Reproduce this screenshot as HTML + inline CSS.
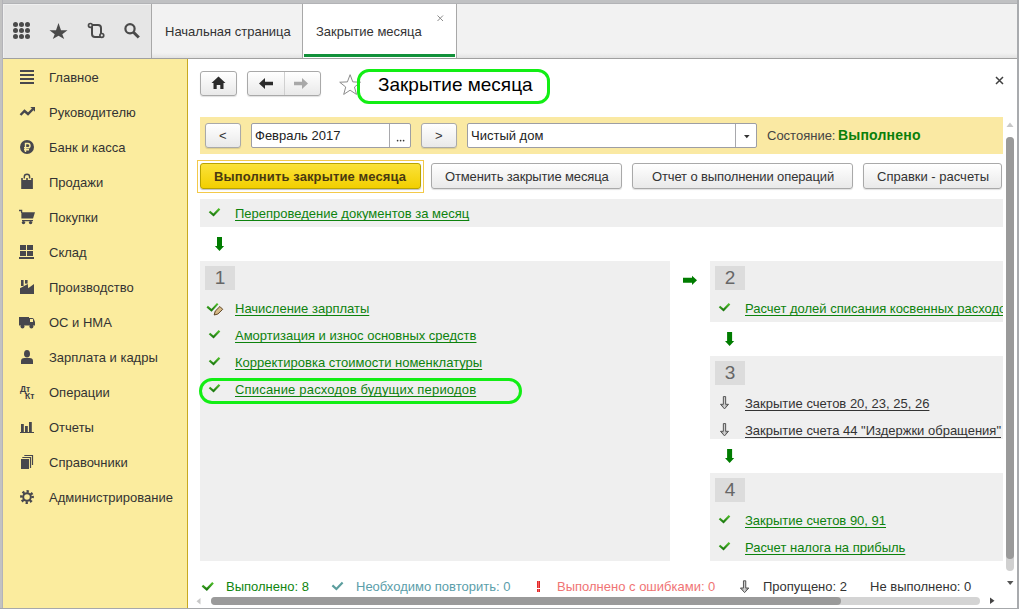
<!DOCTYPE html>
<html><head><meta charset="utf-8">
<style>
*{box-sizing:border-box;margin:0;padding:0}
html,body{width:1019px;height:609px;overflow:hidden;background:#fff}
body{position:relative;font-family:"Liberation Sans",sans-serif;font-size:13px;color:#333}
.a{position:absolute}
.t{position:absolute;white-space:nowrap;font-size:13px;line-height:15px}
svg{position:absolute;overflow:visible}
/* frame */
#frameT{left:0;top:0;width:1019px;height:4px;background:#c0c1c3;border-bottom:1px solid #b2b3b6}
#frameL{left:0;top:0;width:3px;height:609px;background:#c2c2c2;border-right:1px solid #b3b3b8}
#frameR{left:1017px;top:0;width:2px;height:609px;background:#a9abae}
#frameB{left:0;top:608px;width:1019px;height:1px;background:#a6a8ab}
/* toolbar */
#tb{left:3px;top:4px;width:148px;height:54px;background:#e6e6e6;border-top:1px solid #f0f0f0;border-left:1px solid #efefef}
#tabs{left:151px;top:4px;width:866px;height:54px;background:linear-gradient(to bottom,#f2f2f2 0,#f2f2f2 49px,#e2e2e2 54px)}
#tbline{left:3px;top:58px;width:1014px;height:1px;background:#a0a0a0}
.vdiv{position:absolute;width:1px;background:#a8a8a8}
#tab2{left:303px;top:4px;width:153px;height:54px;background:#fff}
#tab2u{left:304px;top:54px;width:151px;height:3px;background:#12913a}
/* sidebar */
#side{left:3px;top:59px;width:184px;height:549px;background:#fbec9e}
#sideB{left:187px;top:59px;width:1px;height:549px;background:#c9a921}
.si{position:absolute;left:49px;font-size:13px;line-height:15px;color:#333;white-space:nowrap}

.btn{border:1px solid #a9a9a9;border-radius:3px;background:linear-gradient(#ffffff,#e9e9e9);box-shadow:0 1px 1px rgba(0,0,0,.12)}
.fld{border:1px solid #9d9ea4;border-radius:2px;background:#fff}
.sec{background:#efefef}
.badge{width:30px;height:24px;background:#dcdcdc;color:#666;font-size:19px;line-height:24px;text-align:center}
.lk{color:#0d820d;text-decoration:underline;text-decoration-skip-ink:none;text-underline-offset:2px}
.dk{color:#333}
</style></head>
<body>
<div class="a" id="frameT"></div>
<div class="a" id="frameL"></div>
<div class="a" id="frameR"></div>
<div class="a" id="frameB"></div>

<div class="a" id="tb"></div>
<div class="a" id="tabs"></div>
<div class="a" id="tab2"></div>
<div class="vdiv" style="left:151px;top:4px;height:54px"></div>
<div class="vdiv" style="left:302px;top:4px;height:54px"></div>
<div class="vdiv" style="left:456px;top:4px;height:54px"></div>
<div class="a" id="tab2u"></div>
<div class="a" id="tbline"></div>
<div class="t" style="left:165px;top:24px;color:#333">Начальная страница</div>
<div class="t" style="left:316px;top:24px;color:#333">Закрытие месяца</div>

<div class="a" id="side"></div>
<div class="a" id="sideB"></div>
<div class="si" style="top:70px">Главное</div>
<div class="si" style="top:105px">Руководителю</div>
<div class="si" style="top:140px">Банк и касса</div>
<div class="si" style="top:175px">Продажи</div>
<div class="si" style="top:210px">Покупки</div>
<div class="si" style="top:245px">Склад</div>
<div class="si" style="top:280px">Производство</div>
<div class="si" style="top:315px">ОС и НМА</div>
<div class="si" style="top:350px">Зарплата и кадры</div>
<div class="si" style="top:385px">Операции</div>
<div class="si" style="top:420px">Отчеты</div>
<div class="si" style="top:455px">Справочники</div>
<div class="si" style="top:490px">Администрирование</div>



<!-- sidebar icons -->
<svg style="left:0;top:0" width="1" height="1">
 <g fill="#47474d">
  <rect x="20" y="70" width="14" height="2"/><rect x="20" y="74" width="14" height="2"/><rect x="20" y="78" width="14" height="2"/><rect x="20" y="82" width="14" height="2"/>
  <path d="M30.3,107 L35,107 L35,111.7 Z"/>
  <circle cx="27" cy="147" r="7"/>
  <path d="M21.2,180 L21.2,178 L22.8,178 L22.8,180 L26.2,180 L26.2,178 L27.8,178 L27.8,180 L31.2,180 L31.2,178 L32.9,178 L32.9,189 L21.2,189 Z"/>
  <path d="M21.4,212.2 L35,212.2 L33,218.6 L21.4,218.6 Z"/>
  <circle cx="23.5" cy="222.6" r="1.7"/><circle cx="30.6" cy="222.6" r="1.7"/>
  <rect x="20" y="245" width="6" height="5"/><rect x="27" y="245" width="6" height="5"/>
  <rect x="20" y="251" width="6" height="5"/><rect x="27" y="251" width="6" height="5"/>
  <rect x="19" y="257" width="15" height="2"/>
  <rect x="21" y="280" width="2.6" height="6"/><rect x="25" y="280" width="2.6" height="3.6"/>
  <path d="M20,288.2 L27.8,284 L28.2,288.2 L34,284 L34,294 L20,294 Z"/>
  <path d="M19,317 L29,317 L29,325.5 L19,325.5 Z"/>
  <path d="M29,318 L32.5,318 Q33.5,318 34,319.5 L35,322 L35,325.5 L29,325.5 Z"/>
  <circle cx="22.5" cy="326.5" r="2"/><circle cx="31.4" cy="326.5" r="2"/>
  <ellipse cx="27" cy="353.8" rx="3" ry="3.8"/>
  <path d="M21,364 L21,361 Q21,358 24.5,358 L29.5,358 Q33,358 33,361 L33,364 Z"/>
  <rect x="21" y="424" width="2.8" height="9"/><rect x="25" y="426" width="2.8" height="7"/><rect x="29" y="422" width="2.8" height="11"/>
  <rect x="20" y="432" width="14" height="1"/>
  <rect x="21" y="459" width="8" height="10"/>
  <circle cx="27" cy="497" r="4.8"/>
 </g>
 <g fill="none" stroke="#47474d">
  <path d="M20.5,115 L24.5,111 L28,114 L33,109" stroke-width="2.4"/>
  <path d="M24.3,178.5 L24.3,176.8 Q24.3,174.2 27,174.2 Q29.6,174.2 29.6,176.8 L29.6,178.5" stroke-width="1.4"/>
  <path d="M19,210.5 L21.6,210.5 L21.6,213 M22,220.6 L33,220.6" stroke-width="1.3"/>
  <path d="M22.3,457.5 L30.5,457.5 L30.5,468 M24.3,455.5 L32.5,455.5 L32.5,465" stroke-width="1.2"/>
  <circle cx="27" cy="497" r="5.6" stroke-width="2.6" stroke-dasharray="2.2 2.2" transform="rotate(-11 27 497)"/>
 </g>
 <path d="M25.5,152 L25.5,143.5 L28,143.5 Q30,143.5 30,145.7 Q30,147.8 28,147.8 L24,147.8 M24,149.7 L29,149.7" fill="none" stroke="#fbec9e" stroke-width="1.4"/>
 <rect x="30" y="319" width="3" height="3" fill="#fbec9e"/>
 <circle cx="27" cy="497" r="2.8" fill="#fbec9e"/>
 <text x="20" y="391.7" font-family="Liberation Sans" font-weight="bold" font-size="8.5" fill="#3c3d46">Дт</text>
 <text x="25" y="399" font-family="Liberation Sans" font-weight="bold" font-size="8.5" fill="#3c3d46">Кт</text>
</svg>

<!-- toolbar icons -->
<svg style="left:0;top:0" width="1" height="1">
 <g fill="#4a4a4a">
  <circle cx="15.5" cy="24.5" r="2.5"/><circle cx="21.5" cy="24.5" r="2.5"/><circle cx="27.5" cy="24.5" r="2.5"/>
  <circle cx="15.5" cy="30.5" r="2.5"/><circle cx="21.5" cy="30.5" r="2.5"/><circle cx="27.5" cy="30.5" r="2.5"/>
  <circle cx="15.5" cy="36.5" r="2.5"/><circle cx="21.5" cy="36.5" r="2.5"/><circle cx="27.5" cy="36.5" r="2.5"/>
  <path d="M58.5,23 L61,30.2 L67.5,30.2 L62.3,34.3 L64.2,39 L58.5,35.8 L52.8,39 L54.7,34.3 L49.5,30.2 L56,30.2 Z"/>
 </g>
 <g fill="none" stroke="#4a4a4a" stroke-width="2">
  <path d="M90.5,25 L98,25 Q101,25 101,28 L101,35.5 M92,26.5 L92,34 Q92,37 95,37 L101.5,37"/>
  <circle cx="90.4" cy="25.4" r="1.9" fill="#e6e6e6" stroke-width="1.7"/>
  <circle cx="101.8" cy="35.4" r="1.9" fill="#e6e6e6" stroke-width="1.7"/>
  <circle cx="130" cy="28.7" r="4.6" stroke-width="2.2"/>
  <path d="M133.5,32.2 L138.8,37.5" stroke-width="3"/>
 </g>
</svg>
<!-- tab close -->
<svg style="left:0;top:0" width="1" height="1"><path d="M437.5,15.5 L443,21 M443,15.5 L437.5,21" stroke="#8a8a8a" stroke-width="1" fill="none"/></svg>

<!-- main header -->
<div class="a btn" style="left:200px;top:71px;width:37px;height:25px"></div>
<div class="a btn" style="left:247px;top:71px;width:74px;height:25px"></div>
<div class="a" style="left:284px;top:72px;width:1px;height:23px;background:#d0d0d0"></div>
<svg style="left:0;top:0" width="1" height="1">
 <path d="M218.5,76.5 L225.5,83 L223.5,83 L223.5,89 L220.3,89 L220.3,85 L216.7,85 L216.7,89 L213.5,89 L213.5,83 L211.5,83 Z" fill="#2b2b2b"/>
 <path d="M259,83.5 L265,78 L265,81.8 L273,81.8 L273,85.2 L265,85.2 L265,89 Z" fill="#2b2b2b"/>
 <path d="M308,83.5 L302,78 L302,81.8 L294,81.8 L294,85.2 L302,85.2 L302,89 Z" fill="#a8a8a8"/>
 <path d="M350.10,74.70 L352.80,81.88 L360.47,82.23 L354.47,87.02 L356.51,94.42 L350.10,90.20 L343.69,94.42 L345.73,87.02 L339.73,82.23 L347.40,81.88 Z" fill="none" stroke="#8c8c8c" stroke-width="1"/>
</svg>
<div class="a" style="left:357px;top:69px;width:193px;height:35px;border:3px solid #12ee14;border-radius:12px"></div>
<div class="t" style="left:378px;top:74px;font-size:19px;line-height:21px;color:#000">Закрытие месяца</div>
<svg style="left:0;top:0" width="1" height="1"><path d="M996,77 L1003,84 M1003,77 L996,84" stroke="#404040" stroke-width="1.5" fill="none"/></svg>

<!-- filter bar -->
<div class="a" style="left:200px;top:117px;width:803px;height:37px;background:#fae9a3"></div>
<div class="a btn" style="left:205px;top:123px;width:36px;height:25px"></div>
<div class="t" style="left:219px;top:128px;color:#333">&lt;</div>
<div class="a fld" style="left:251px;top:123px;width:160px;height:25px"></div>
<div class="a" style="left:389px;top:124px;width:1px;height:23px;background:#a8a8ac"></div>
<div class="t" style="left:255px;top:128px;color:#222">Февраль 2017</div>
<svg style="left:0;top:0" width="1" height="1"><g fill="#3a3a3a"><circle cx="397.6" cy="140.6" r="0.85"/><circle cx="400.6" cy="140.6" r="0.85"/><circle cx="403.6" cy="140.6" r="0.85"/></g></svg>
<div class="a btn" style="left:421px;top:123px;width:36px;height:25px"></div>
<div class="t" style="left:435px;top:128px;color:#333">&gt;</div>
<div class="a fld" style="left:467px;top:123px;width:290px;height:25px"></div>
<div class="a" style="left:735px;top:124px;width:1px;height:23px;background:#a8a8ac"></div>
<svg style="left:0;top:0" width="1" height="1"><path d="M744,135 L749.6,135 L746.8,138.2 Z" fill="#333"/></svg>
<div class="t" style="left:471px;top:128px;color:#222">Чистый дом</div>
<div class="t" style="left:767px;top:128px;color:#444">Состояние:</div>
<div class="t" style="left:838px;top:127px;font-size:14px;line-height:16px;font-weight:bold;color:#0a7f0a;letter-spacing:0.2px">Выполнено</div>

<!-- buttons -->
<div class="a" style="left:197px;top:160px;width:227px;height:33px;border:1px solid #f3c94a"></div>
<div class="a" style="left:200px;top:163px;width:221px;height:26px;border:1px solid #b8a300;border-radius:3px;background:linear-gradient(#fbe23a,#f2cf00);box-shadow:0 1px 1px rgba(0,0,0,.25)"></div>
<div class="t" style="left:214px;top:169px;font-weight:bold;color:#4a3a10;letter-spacing:0.12px">Выполнить закрытие месяца</div>
<div class="a btn" style="left:431px;top:163px;width:191px;height:26px"></div>
<div class="t" style="left:445px;top:169px;color:#333;letter-spacing:-0.14px">Отменить закрытие месяца</div>
<div class="a btn" style="left:632px;top:163px;width:221px;height:26px"></div>
<div class="t" style="left:652px;top:169px;color:#333;letter-spacing:-0.13px">Отчет о выполнении операций</div>
<div class="a btn" style="left:863px;top:163px;width:139px;height:26px"></div>
<div class="t" style="left:877px;top:169px;color:#333">Справки - расчеты</div>

<!-- sections -->
<div class="a sec" style="left:200px;top:199px;width:803px;height:28px"></div>
<div class="a sec" style="left:200px;top:261px;width:470px;height:300px"></div>
<div class="a sec" style="left:710px;top:261px;width:293px;height:61px"></div>
<div class="a sec" style="left:710px;top:356px;width:293px;height:83px"></div>
<div class="a sec" style="left:710px;top:473px;width:293px;height:88px"></div>
<div class="a badge" style="left:205px;top:266px">1</div>
<div class="a badge" style="left:715px;top:266px">2</div>
<div class="a badge" style="left:715px;top:361px">3</div>
<div class="a badge" style="left:715px;top:478px">4</div>

<div class="t lk" style="left:235px;top:206px">Перепроведение документов за месяц</div>
<div class="t lk" style="left:235px;top:301px">Начисление зарплаты</div>
<div class="t lk" style="left:235px;top:328px">Амортизация и износ основных средств</div>
<div class="t lk" style="left:235px;top:355px">Корректировка стоимости номенклатуры</div>
<div class="t lk" style="left:235px;top:382px;letter-spacing:0.18px">Списание расходов будущих периодов</div>
<div class="a" style="left:745px;top:298px;width:258px;height:22px;overflow:hidden"><div class="t lk" style="left:0;top:3px">Расчет долей списания косвенных расходов</div></div>
<div class="t lk dk" style="left:745px;top:396px">Закрытие счетов 20, 23, 25, 26</div>
<div class="t lk dk" style="left:745px;top:423px">Закрытие счета 44 "Издержки обращения"</div>
<div class="t lk" style="left:745px;top:513px">Закрытие счетов 90, 91</div>
<div class="t lk" style="left:745px;top:540px">Расчет налога на прибыль</div>

<div class="a" style="left:199px;top:378px;width:323px;height:26px;border:3px solid #12ee14;border-radius:13px"></div>

<svg style="left:0;top:0" width="1" height="1">
 <defs><linearGradient id="gck" x1="0" y1="0" x2="0" y2="1"><stop offset="0" stop-color="#4fbf2a"/><stop offset="1" stop-color="#1d7a10"/></linearGradient>
 <linearGradient id="gar" x1="0" y1="0" x2="1" y2="0"><stop offset="0" stop-color="#888"/><stop offset=".5" stop-color="#d0d0d0"/><stop offset="1" stop-color="#777"/></linearGradient></defs>
 <g fill="none" stroke="url(#gck)" stroke-width="2.3" stroke-linejoin="miter">
  <path d="M207.2,306.6 L211.5,310.4 L217.7,303.6" stroke-width="2.1"/>
  <path d="M209.5,211.5 L213.5,215 L219.5,208.7"/><path d="M209.5,333.5 L213.5,337 L219.5,330.7"/><path d="M209.5,360.5 L213.5,364 L219.5,357.7"/><path d="M209.5,387.5 L213.5,391 L219.5,384.7"/><path d="M719.5,306.5 L723.5,310 L729.5,303.7"/><path d="M719.5,518.5 L723.5,522 L729.5,515.7"/><path d="M719.5,545.5 L723.5,549 L729.5,542.7"/>
 </g>
 <path d="M219.9,306.5 L222.7,309.3 L217.9,314 L214.2,315 L215.2,311.2 Z" fill="#d8bb88" stroke="#4f3414" stroke-width="0.9" stroke-linejoin="round"/>
 <g fill="#007c00">
  <path d="M217.0,237 L222.0,237 L222.0,246 L224.1,246 L219.5,251 L214.9,246 L217.0,246 Z"/><path d="M727.1,332 L732.1,332 L732.1,341 L734.2,341 L729.6,346 L725.0,341 L727.1,341 Z"/><path d="M727.1,449 L732.1,449 L732.1,458 L734.2,458 L729.6,463 L725.0,458 L727.1,458 Z"/>
  <path d="M683,277.8 L692,277.8 L692,275.7 L697,280.3 L692,284.9 L692,282.8 L683,282.8 Z"/>
 </g>
 <g fill="url(#gar)" stroke="#555" stroke-width="1" stroke-linejoin="round">
  <path d="M723.35,396.6 L725.65,396.6 L725.65,404.3 L728.5,404.3 L724.5,408.90000000000003 L720.5,404.3 L723.35,404.3 Z"/><path d="M723.35,423.6 L725.65,423.6 L725.65,431.3 L728.5,431.3 L724.5,435.90000000000003 L720.5,431.3 L723.35,431.3 Z"/><path d="M743.45,580.8 L745.75,580.8 L745.75,587.9999999999999 L748.8000000000001,587.9999999999999 L744.6,592.5999999999999 L740.4,587.9999999999999 L743.45,587.9999999999999 Z"/>
 </g>
</svg>

<!-- footer -->
<svg style="left:0;top:0" width="1" height="1">
 <path d="M202.4,585.6 L206.8,589.4 L213,582.8" fill="none" stroke="url(#gck)" stroke-width="2.3"/>
 <path d="M332.4,585.4 L336.4,589 L342.6,582.6" fill="none" stroke="#5c9e9e" stroke-width="2.2"/>
 <defs><linearGradient id="grd" x1="0" y1="0" x2="1" y2="0"><stop offset="0" stop-color="#d01818"/><stop offset=".5" stop-color="#ff5a5a"/><stop offset="1" stop-color="#c01010"/></linearGradient></defs><path d="M537,581 L540,581 L540,588 L537,588 Z M537,589 L540,589 L540,592 L537,592 Z" fill="url(#grd)"/>
</svg>
<div class="t" style="left:226px;top:579px;color:#0f850f">Выполнено: 8</div>
<div class="t" style="left:356px;top:579px;color:#5b9eaa">Необходимо повторить: 0</div>
<div class="t" style="left:557px;top:579px;color:#f07474">Выполнено с ошибками: 0</div>
<div class="t" style="left:763px;top:579px;color:#333">Пропущено: 2</div>
<div class="t" style="left:870px;top:579px;color:#333">Не выполнено: 0</div>

<!-- scrollbars -->
<svg style="left:0;top:0" width="1" height="1">
 <path d="M1006.5,127 L1013.5,127 L1010,122.5 Z" fill="#c8c8c8"/>
 <path d="M1007,581 L1013.5,581 L1010.2,585 Z" fill="#555"/>
 <path d="M200.5,598 L200.5,604.5 L196.5,601.3 Z" fill="#c8c8c8"/>
 <path d="M990,597.5 L990,604 L994.5,600.8 Z" fill="#444"/>
</svg>
<div class="a" style="left:1006px;top:137px;width:8px;height:434px;border-radius:4px;background:#d0d0d0"></div>
<div class="a" style="left:1006px;top:137px;width:8px;height:422px;border-radius:4px;background:#9a9a9a"></div>
<div class="a" style="left:211px;top:597px;width:769px;height:8px;border-radius:4px;background:#d4d4d4"></div>
<div class="a" style="left:211px;top:597px;width:630px;height:8px;border-radius:4px;background:#9a9a9a"></div>

</body></html>
